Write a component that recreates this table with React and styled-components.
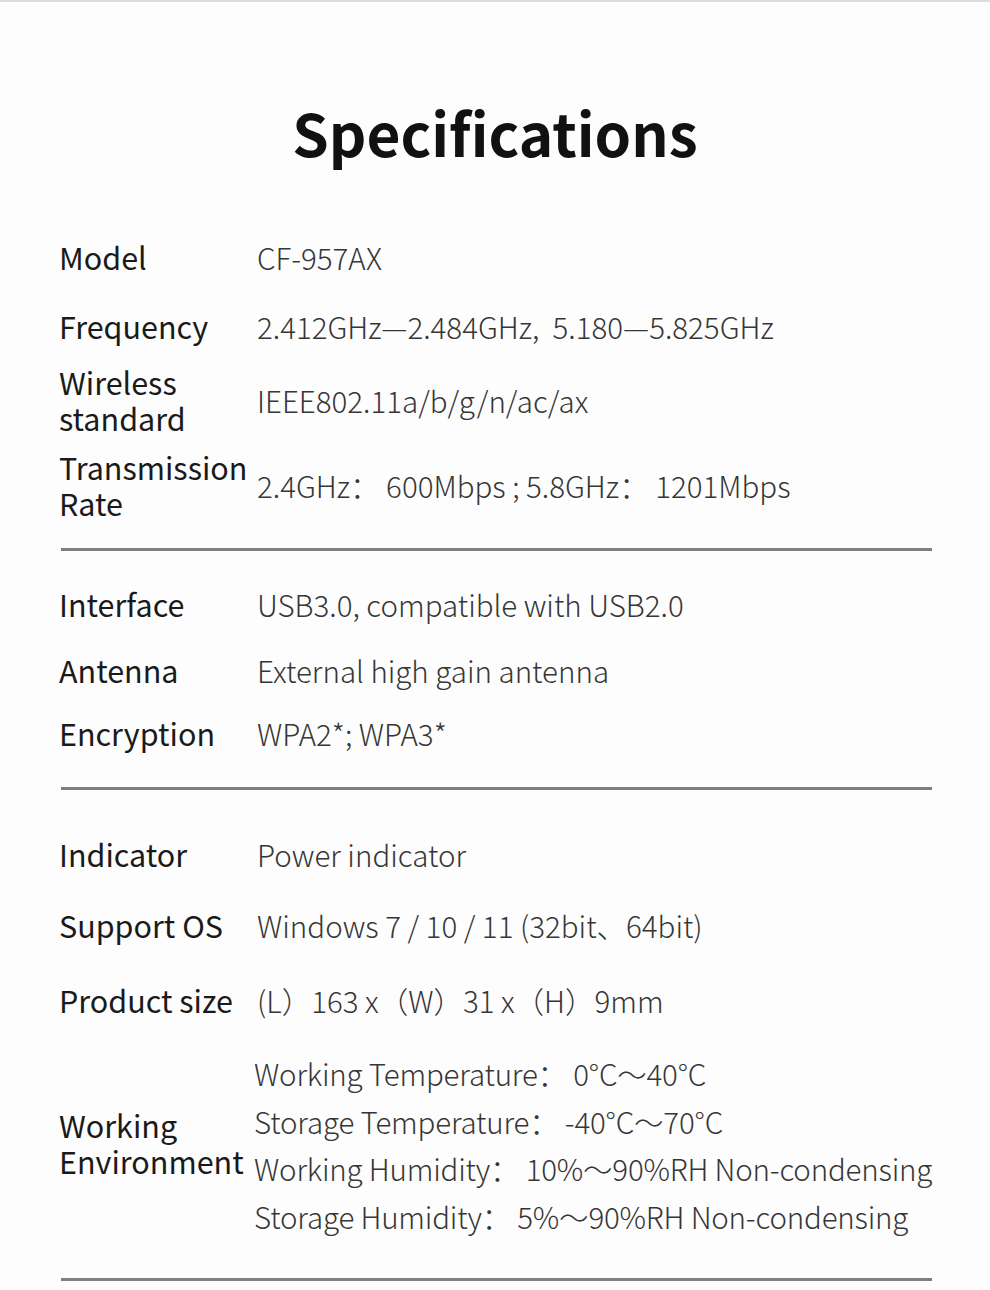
import styled, { createGlobalStyle } from 'styled-components';

const GlobalStyle = createGlobalStyle`
  html, body {
    margin: 0;
    padding: 0;
    background: #fdfdfd;
  }
  body {
    font-family: "Noto Sans CJK SC", "Noto Sans", sans-serif;
  }
`;

// spec data, grouped by the divider lines
const sections = [
  {
    gap: 16,
    pad: 0,
    rows: [
      { h: 66, label: 'Model', value: ['CF-957AX'] },
      { h: 72, label: 'Frequency', value: ['2.412GHz—2.484GHz,\u00a0 5.180—5.825GHz'] },
      { h: 76, label: ['Wireless', 'standard'], value: ['IEEE802.11a/b/g/n/ac/ax'] },
      { h: 94, label: ['Transmission', 'Rate'], value: ['2.4GHz： 600Mbps ; 5.8GHz： 1201Mbps'] },
    ],
  },
  {
    gap: 21,
    pad: 17,
    rows: [
      { h: 72, label: 'Interface', value: ['USB3.0, compatible with USB2.0'] },
      { h: 60, label: 'Antenna', value: ['External high gain antenna'] },
      { h: 66, label: 'Encryption', value: ['WPA2*; WPA3*'] },
    ],
  },
  {
    gap: 44,
    pad: 18,
    rows: [
      { h: 92, label: 'Indicator', value: ['Power indicator'] },
      { h: 50, label: 'Support OS', value: ['Windows 7 / 10 / 11 (32bit、64bit)'] },
      { h: 100, label: 'Product size', value: ['(L）163 x（W）31 x（H）9mm'] },
      {
        h: 184,
        label: ['Working', 'Environment'],
        value: [
          'Working Temperature： 0°C～40°C',
          'Storage Temperature： -40°C～70°C',
          'Working Humidity： 10%～90%RH Non-condensing',
          'Storage Humidity： 5%～90%RH Non-condensing',
        ],
      },
    ],
  },
];

function App() {
  return (
    <S.Page>
      <GlobalStyle />
      <S.Title>Specifications</S.Title>
      {sections.map((sec, i) => (
        <S.Section key={i} $pad={sec.pad}>
          {sec.rows.map((row) => {
            const label = Array.isArray(row.label) ? row.label : [row.label];
            const multi = row.value.length > 1;
            return (
              <S.Row key={label.join(' ')} $h={row.h}>
                <S.Label $lift={multi}>
                  {label.map((l) => (
                    <div key={l}>{l}</div>
                  ))}
                </S.Label>
                <S.Value $multi={multi}>
                  {row.value.map((v) => (
                    <div key={v}>{v}</div>
                  ))}
                </S.Value>
              </S.Row>
            );
          })}
          <S.Divider $gap={sec.gap} />
        </S.Section>
      ))}
    </S.Page>
  );
}
export default App;

const Page = styled.div`
  width: 990px;
  height: 1290px;
  box-sizing: border-box;
  border-top: 2px solid #dcdcdc;
  background: #fdfdfd;
  overflow: hidden;
`;

const Title = styled.h1`
  margin: 0;
  padding-top: 90px;
  height: 222px;
  box-sizing: border-box;
  text-align: center;
  font-size: 58.5px;
  line-height: 80px;
  font-weight: 700;
  color: #111;
`;

const Section = styled.div`
  padding: ${(p) => p.$pad}px 58px 0 59px;
`;

const Row = styled.div`
  display: grid;
  grid-template-columns: 198px 1fr;
  align-items: center;
  height: ${(p) => p.$h}px;
`;

const Label = styled.div`
  font-size: 30.5px;
  line-height: 36px;
  font-weight: 400;
  color: #1a1a1a;
  ${(p) => p.$lift && 'margin-bottom: 4px;'}
`;

const Value = styled.div`
  font-size: 29.5px;
  line-height: ${(p) => (p.$multi ? 47.5 : 36)}px;
  font-weight: 300;
  color: #363636;
  white-space: nowrap;
  ${(p) => p.$multi && 'margin-left: -3px; letter-spacing: -0.2px;'}
`;

const Divider = styled.div`
  margin-top: ${(p) => p.$gap}px;
  margin-left: 2px;
  height: 3px;
  background: #7f7f7f;
`;

const S = {
  Page,
  Title,
  Section,
  Row,
  Label,
  Value,
  Divider,
};
